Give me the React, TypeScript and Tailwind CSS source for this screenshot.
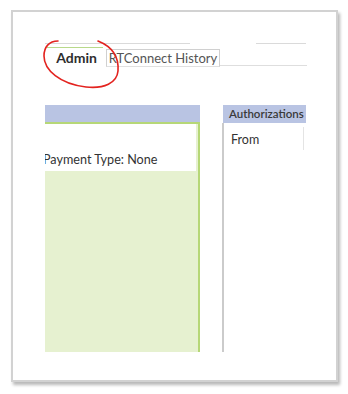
import React from "react";

export default function App() {
  const font = { fontFamily: "Lato, 'Open Sans', sans-serif" };
  return (
    <div className="relative w-[348px] h-[394px] bg-white overflow-hidden pt-[10px] pl-[11px]" style={font}>
      <div className="relative w-[327px] h-[372px] bg-white border-2 border-[#d2d2d2] shadow-[2px_3px_3px_rgba(0,0,0,0.28)] pl-[32px] pr-[29px] pt-[31px]">
        {/* top thin lines */}
        <div className="flex h-[1px]">
          <div className="w-[145px] h-[1px] bg-[#dadada]" />
          <div className="ml-[66px] w-[50px] h-[1px] bg-[#dadada]" />
        </div>
        {/* tabs */}
        <div className="flex items-end h-[23px]">
          <div className="relative w-[61px] h-[20px] flex items-center justify-center">
            <div className="absolute top-0 left-[2px] right-[3px] h-[1px] bg-[#b8d98a]" />
            <span className="text-[14px] font-bold text-[#2e2e2e] leading-none mt-[2px] ml-[2px]">Admin</span>
          </div>
          <div className="w-[114px] h-[18px] border border-[#d0d0d0] border-b-[#e0e0e0] flex items-center justify-center bg-white">
            <span className="text-[13px] text-[#555] leading-none">RTConnect History</span>
          </div>
          <div className="flex-1 h-[1px] bg-[#dedede] mb-[1px]" />
        </div>
        {/* panels */}
        <div className="flex mt-[38px] h-[247px]">
          <div className="w-[155px] flex flex-col">
            <div className="h-[17px] bg-[#b9c4e3]" />
            <div className="flex-1 flex flex-col border-t-2 border-r-2 border-[#b6d777] bg-[#e6f1d0]">
              <div className="h-[47px] bg-white mr-[2px] overflow-hidden flex items-end pb-[4px]">
                <span className="-ml-[2px] text-[12.6px] text-[#333] leading-none whitespace-nowrap">Payment Type: None</span>
              </div>
            </div>
          </div>
          <div className="ml-[22px] w-[84px] flex flex-col">
            <div className="h-[18px] bg-[#b9c4e3] ml-[1px] flex items-center pl-[6px] overflow-hidden">
              <span className="text-[11.5px] font-semibold text-[#3a3a3a] leading-none whitespace-nowrap">Authorizations</span>
            </div>
            <div className="flex-1 border-l-2 border-[#cbcbcb] flex">
              <div className="flex-1 pt-[3px] pl-[7px]">
                <span className="text-[12.5px] text-[#333] leading-none">From</span>
              </div>
              <div className="mt-[4px] w-[1px] h-[23px] bg-[#e4e4e4] mr-[2px]" />
            </div>
          </div>
        </div>
      </div>
      {/* red hand-drawn circle */}
      <svg className="absolute left-0 top-0" width="348" height="394" viewBox="0 0 348 394">
        <path
          d="M 58 41 C 49 41, 44 47, 44 56 C 44 70, 60 84, 86 87 C 104 89, 117 83, 118 71 C 119 58, 113 47, 98 41"
          fill="none"
          stroke="#e3231f"
          strokeWidth="1.6"
          strokeLinecap="round"
        />
      </svg>
    </div>
  );
}
